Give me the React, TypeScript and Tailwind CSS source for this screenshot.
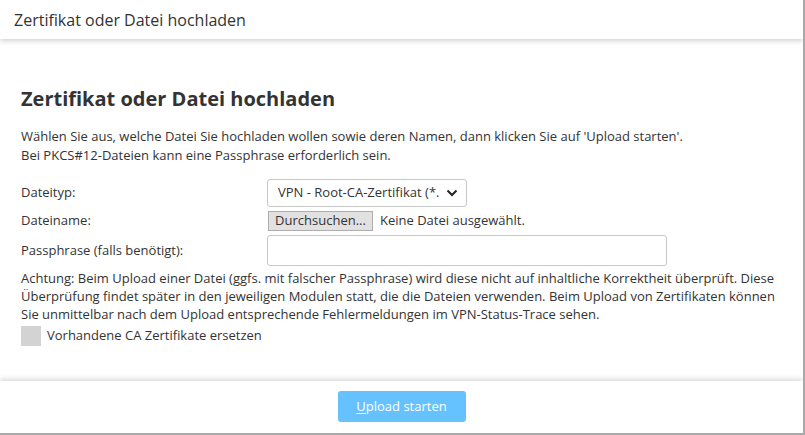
import React from "react";

export default function App() {
  return (
    <div
      className="w-[805px] h-[435px] bg-white flex flex-col border-r-2 border-b-2 border-[#a9a9a9] text-[#333333] overflow-hidden"
      style={{ fontFamily: '"Open Sans", "Noto Sans", sans-serif' }}
    >
      <div className="h-[39px] shrink-0 flex items-center px-[14px] text-[16px] shadow-[0_2px_5px_rgba(0,0,0,0.18)] relative z-10">
        Zertifikat oder Datei hochladen
      </div>
      <div className="flex-1 px-[21px] pt-[46px] text-[13px]">
        <h2 className="text-[20px] font-bold leading-[28px] mb-[14px]">
          Zertifikat oder Datei hochladen
        </h2>
        <p className="leading-[19px]">
          Wählen Sie aus, welche Datei Sie hochladen wollen sowie deren Namen, dann klicken Sie auf 'Upload starten'.
          <br />
          Bei PKCS#12-Dateien kann eine Passphrase erforderlich sein.
        </p>
        <div className="mt-[14px] flex flex-col gap-[4px]">
          <div className="flex items-center h-[28px]">
            <div className="w-[246px]">Dateityp:</div>
            <div className="w-[200px] h-[28px] border border-[#c8c8c8] rounded-[3px] flex items-center pl-[10px] pr-[8px] justify-between">
              <span className="whitespace-nowrap overflow-hidden">VPN - Root-CA-Zertifikat (*.</span>
              <svg width="12" height="8" viewBox="0 0 12 8" className="shrink-0 ml-[2px]">
                <path d="M1.5 1.5 L6 6 L10.5 1.5" fill="none" stroke="#222" strokeWidth="2" />
              </svg>
            </div>
          </div>
          <div className="flex items-center h-[20px]">
            <div className="w-[247px]">Dateiname:</div>
            <div className="w-[105px] h-[20px] flex items-center justify-center bg-[#e1e1e1] border border-[#adadad] text-[13px] whitespace-nowrap">
              Durchsuchen...
            </div>
            <span className="ml-[7px]">Keine Datei ausgewählt.</span>
          </div>
          <div className="flex items-center h-[31px]">
            <div className="w-[246px]">Passphrase (falls benötigt):</div>
            <div className="w-[400px] h-[31px] border border-[#c8c8c8] rounded-[3px]" />
          </div>
        </div>
        <p className="leading-[18px] mt-[3px]">
          Achtung: Beim Upload einer Datei (ggfs. mit falscher Passphrase) wird diese nicht auf inhaltliche Korrektheit überprüft. Diese Überprüfung findet später in den jeweiligen Modulen statt, die die Dateien verwenden. Beim Upload von Zertifikaten können Sie unmittelbar nach dem Upload entsprechende Fehlermeldungen im VPN-Status-Trace sehen.
        </p>
        <div className="flex items-center mt-[3px]">
          <div className="w-[20px] h-[20px] bg-[#d3d3d3]" />
          <span className="ml-[6px]">Vorhandene CA Zertifikate ersetzen</span>
        </div>
      </div>
      <div className="h-[52px] shrink-0 flex items-start justify-center pt-[10px] shadow-[0_-2px_5px_rgba(0,0,0,0.15)] relative z-10 bg-white">
        <button className="w-[128px] h-[31px] rounded-[3px] bg-[#66c2ff] text-white text-[13px]">
          <span className="underline underline-offset-2">U</span>pload starten
        </button>
      </div>
    </div>
  );
}
